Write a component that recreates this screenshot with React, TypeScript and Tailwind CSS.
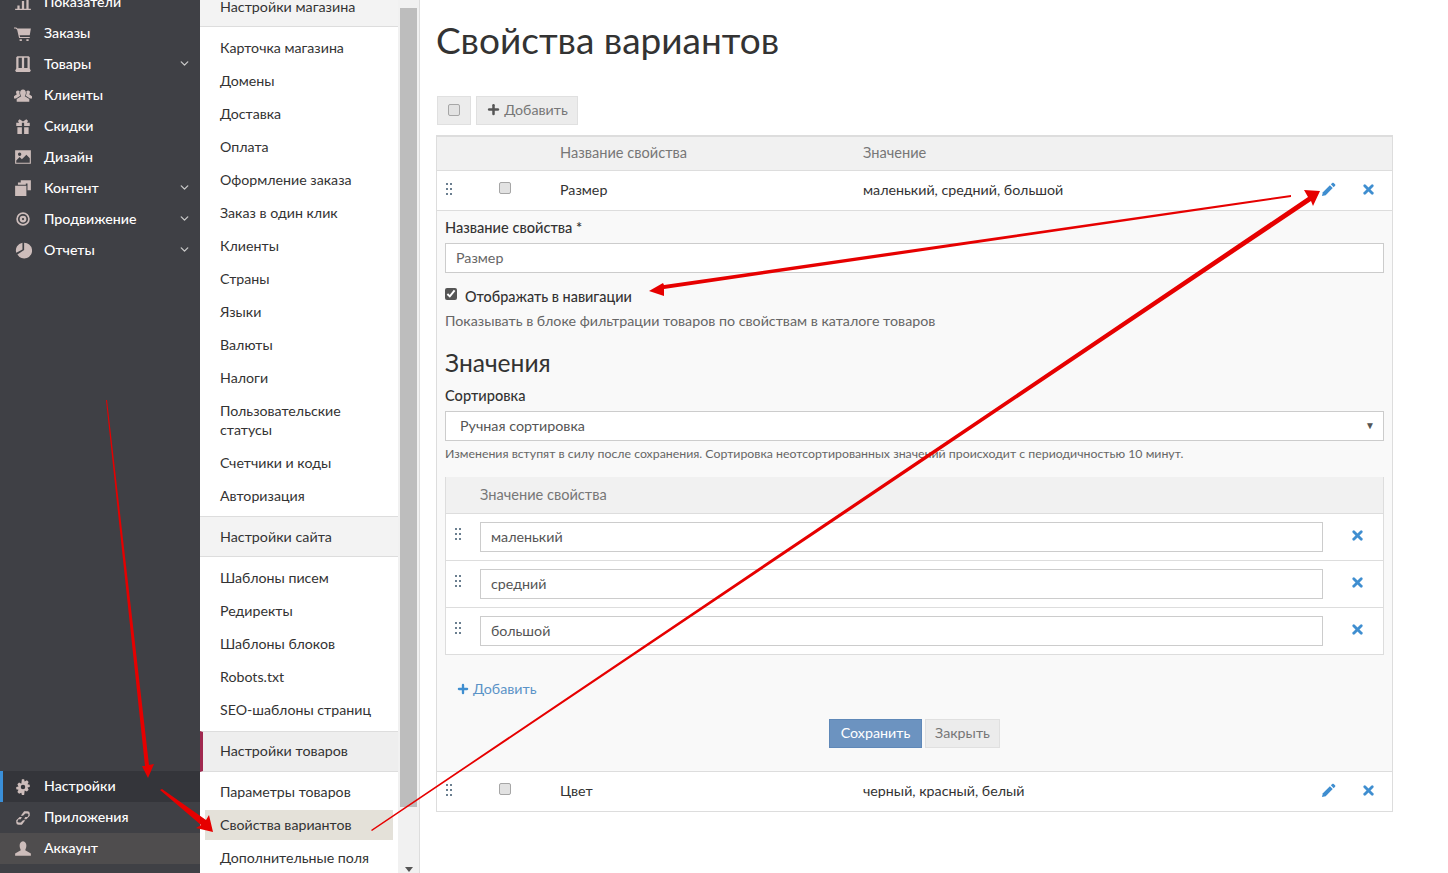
import React from "react";
import { Plus, X, ChevronDown } from "lucide-react";

const Icon = ({ d }: { d: string }) => (
  <svg viewBox="0 0 16 16" className="w-[18px] h-[18px]" fill="#cdbdbb"><path d={d} /></svg>
);
const top: [string, string, boolean][] = [
  ["Показатели", "M1 14h14v1H1zM3 11h2v3H3zM7 7h2v7H7zM11 2h2v12h-2z", false],
  ["Заказы", "M0 3h2l1 1h12l-1 6H5l.4 1.500h8.600v1H4.500L2.800 5 1.500 4H0zM5 13.500h2V15H5zM11 13.500h2V15h-2z", false],
  ["Товары", "M3 1h10l1 1v10l1 2-1 1H2l-1-1 1-2V2zM4 2.500v9h3v-9zM9 2.500v9h3v-9z", true],
  ["Клиенты", "M8 3c1.700 0 2.600 1.400 2.600 3 0 1.300-.6 2.300-1 3l4 2.500V14H2.400v-2.500l4-2.500c-.4-.7-1-1.700-1-3 0-1.600.9-3 2.600-3zM3.500 4c.6 0 1.100.2 1.500.6-.4 1.500 0 3 .6 4L1.800 11H0V9l2.500-1.600C2 6.700 1.800 6 1.800 5.500 1.800 4.700 2.500 4 3.500 4zM12.500 4c1 0 1.700.7 1.700 1.500 0 .5-.2 1.200-.7 1.900L16 9v2h-1.800l-3.800-2.400c.6-1 1-2.500.6-4 .4-.4.900-.6 1.500-.6z", false],
  ["Скидки", "M2 5h2.500L3.500 3.500 5 2l3 2 3-2 1.500 1.500L11.500 5H14v3H9V5H7v3H2zM3 9h4v6H3zM9 9h4v6H9z", false],
  ["Дизайн", "M1 2h14v12H1zM2 3v10h12V9l-3-3-4 4-2-2-3 3zM5 4a1.500 1.500 0 100 3 1.500 1.500 0 000-3z", false],
  ["Контент", "M6 1h9v9h-3V4H6zM3.500 3h7v2h-7zM1 6h10v9H1z", true],
  ["Продвижение", "M8 2a6 6 0 100 12A6 6 0 008 2zm0 1.500a4.500 4.500 0 110 9 4.500 4.500 0 010-9zM8 5a3 3 0 100 6 3 3 0 000-6zm0 2a1 1 0 110 2 1 1 0 010-2z", true],
  ["Отчеты", "M9 1.500a7 7 0 11-6 10.500l6-4zM7.500 1.500v6l-5.500 3a7 7 0 015.500-9z", true],
];
const bottom: [string, string, string][] = [
  ["Настройки", "M7 1h2l.5 2 2-1 1.500 1.500-1 2 2 .5v2l-2 .5 1 2-1.500 1.500-2-1L9 15H7l-.5-2-2 1L3 12.500l1-2-2-.5V8l2-.5-1-2L4.500 4l2 1zM8 6a2 2 0 100 4 2 2 0 000-4z", "bg-[#34353a] border-l-[3px] border-[#3a8fd8] pl-[11px]"],
  ["Приложения", "M9 2h3a2 2 0 012 2v2l-3 3H9l1-2h2l1-2-1-1H10L8 6H6zM7 14H4a2 2 0 01-2-2v-2l3-3h2L6 9H4l-1 2 1 1h2l2-2h2z", "pl-[14px]"],
  ["Аккаунт", "M8 1c2 0 3 2 3 4s-1 3-1 4l5 3v2H1v-2l5-3c0-1-1-2-1-4s1-4 3-4z", "bg-[#4f4d4e] pl-[14px]"],
];
const Item = ({ t, active }: { t: string; active?: boolean }) => (
  <div className={`mb-[3px] ml-[5px] mr-[5px] pl-[15px] py-[5px] text-[14.200px] leading-[20px] text-[#333] ${active ? "bg-[#e4e1d9]" : ""}`}>{t}</div>
);
const Head = ({ t, mark }: { t: string; mark?: boolean }) => (
  <div className={`h-[41px] flex items-center text-[14.300px] border-y border-[#ddd] ${mark ? "border-l-[3px] border-l-[#a0284f] pl-[17px] pb-[2px] bg-[#eee]" : "pl-5 bg-[#f3f3f3]"} text-[#333]`}>{t}</div>
);
const Grip = () => (
  <div className="grid grid-cols-2 w-[6px] gap-x-[2px] gap-y-[3px]">
    {[0, 1, 2, 3, 4, 5].map((i) => <span key={i} className="w-[2px] h-[2px] bg-[#6b7f90]" />)}
  </div>
);
const Box = () => (
  <span className="block w-[12px] h-[12px] rounded-[2px] bg-[#e2e2e2] border border-[#a6a6a6]" />
);
const Checked = () => <input type="checkbox" defaultChecked className="w-[12px] h-[12px] m-0 -mt-[6px] accent-[#555]" />;
const BluePencil = () => (
  <svg viewBox="0 0 16 16" className="w-[15px] h-[15px]" fill="#3f8ed0">
    <path d="M1 15l1-4 7.500-7.500 3 3L5 14z" />
    <path d="M10.500 2.500L12 1c.5-.4 1-.4 1.500 0l1.500 1.500c.4.5.4 1 0 1.500l-1.500 1.500z" />
  </svg>
);
const BlueX = () => <X size={15} stroke="#3f8ed0" strokeWidth={4.5} />;
const Row = ({ a, b }: { a: string; b: string }) => (
  <div className="flex items-center h-[39px] bg-white text-[14.250px] text-[#333]">
    <div className="w-[62px] pl-[9px] -mt-[4px]"><Grip /></div>
    <div className="w-[61px] -mt-[6px]"><Box /></div>
    <div className="w-[303px] pb-[2px]">{a}</div>
    <div className="flex-1 pb-[2px]">{b}</div>
    <div className="w-[40px] -mt-[3px]"><BluePencil /></div>
    <div className="w-[31px] -mt-[3px]"><BlueX /></div>
  </div>
);
const Value = ({ v, last }: { v: string; last?: boolean }) => (
  <div className={`flex items-center ${last ? "h-[46px]" : "h-[47px] border-b border-[#ddd]"}`}>
    <div className="w-[34px] pl-[9px] -mt-[6px]"><Grip /></div>
    <div className="w-[843px] h-[30px] border border-[#ccc] bg-white pl-[10px] flex items-center text-[14.250px] text-[#555]">{v}</div>
    <div className="pl-[27px] -mt-[4px]"><BlueX /></div>
  </div>
);

export default function App() {
  return (
    <div className="relative flex h-[873px] w-[1448px] overflow-hidden bg-white" style={{ fontFamily: 'Lato,"Open Sans",sans-serif' }}>
      <aside className="w-[200px] shrink-0 bg-[#3f4045] flex flex-col justify-between text-[14.200px] font-medium text-white">
        <div className="-mt-[14px]">
          {top.map(([t, d, c]) => (
            <div key={t} className="flex items-center h-[31px] pl-[14px] pr-[9px]">
              <Icon d={d} /><span className="ml-[12px] flex-1">{t}</span>
              {c && <ChevronDown size={13} stroke="#c7c7c7" strokeWidth={2.5} />}
            </div>
          ))}
        </div>
        <div className="pb-[9px]">
          {bottom.map(([t, d, c]) => (
            <div key={t} className={`flex items-center h-[31px] ${c}`}>
              <Icon d={d} /><span className="ml-3 pb-[2px]">{t}</span>
            </div>
          ))}
        </div>
      </aside>
      <nav className="w-[198px] shrink-0 -mt-[14px]">
        <Head t="Настройки магазина" />
        <div className="pt-[6px] pb-[2px]">
          {["Карточка магазина","Домены","Доставка","Оплата","Оформление заказа","Заказ в один клик","Клиенты","Страны","Языки","Валюты","Налоги"].map((t) => <Item key={t} t={t} />)}
          <div className="mb-[4px] ml-[20px] py-[5px] text-[14.200px] leading-[19px] text-[#333] mr-8">Пользовательские статусы</div>
          <Item t="Счетчики и коды" /><Item t="Авторизация" />
        </div>
        <Head t="Настройки сайта" />
        <div className="pt-[6px] pb-[3px]">
          {["Шаблоны писем","Редиректы","Шаблоны блоков","Robots.txt","SEO-шаблоны страниц"].map((t) => <Item key={t} t={t} />)}
        </div>
        <Head t="Настройки товаров" mark />
        <div className="pt-[5px]">
          <Item t="Параметры товаров" /><Item t="Свойства вариантов" active /><Item t="Дополнительные поля" />
        </div>
      </nav>
      <div className="w-[22px] shrink-0 h-full bg-[#f1f1f1] border-r border-[#ddd] flex flex-col px-[2px] pt-[8px]">
        <div className="h-[799px] w-[17px] bg-[#bdbdbd]" />
        <div className="mt-auto mx-auto mb-[1px] border-x-[4px] border-x-transparent border-t-[5px] border-t-[#555]" />
      </div>
      <main className="flex-1 pl-[16px] pr-[55px] text-[#333]">
        <h1 className="text-[37px] leading-[50px] mt-[15px] mb-[31px] text-[#333]">Свойства вариантов</h1>
        <div className="flex gap-[5px] ml-[1px] h-[29px] mb-[10px]">
          <div className="w-[34px] bg-[#ececec] border border-[#e0e0e0] flex items-center justify-center pb-[2px]"><Box /></div>
          <div className="w-[102px] bg-[#ececec] border border-[#e0e0e0] flex items-center justify-center gap-[3px] pb-[2px] text-[14.250px] text-[#777]"><Plus size={15} strokeWidth={4} stroke="#555" />Добавить</div>
        </div>
        <section className="border border-[#ddd] border-t-2">
          <div className="flex items-center h-[34px] bg-[#f1f1f1] border-b border-[#ddd] pb-[2px] text-[14.600px] text-[#777]">
            <div className="w-[123px]" /><div className="w-[303px]">Название свойства</div><div>Значение</div>
          </div>
          <Row a="Размер" b="маленький, средний, большой" />
          <div className="bg-[#f9f9f9] border-y border-[#ddd] h-[562px] px-[8px] pt-[7px]">
            <div className="text-[14.600px] font-medium leading-[20px]">Название свойства *</div>
            <div className="mt-[5px] h-[30px] border border-[#ccc] bg-white pl-[10px] flex items-center text-[14.250px] text-[#666]">Размер</div>
            <div className="flex items-center mt-[14px] h-[20px] text-[14.400px] font-medium"><Checked /><span className="ml-[8px]">Отображать в навигации</span></div>
            <div className="mt-[4px] text-[14.250px] leading-[20px] text-[#666]">Показывать в блоке фильтрации товаров по свойствам в каталоге товаров</div>
            <h2 className="mt-[17px] text-[24.600px] leading-[30px]">Значения</h2>
            <div className="mt-[8px] text-[14.600px] font-medium leading-[20px]">Сортировка</div>
            <div className="mt-[5px] h-[30px] border border-[#ccc] bg-white pl-[14px] pr-[8px] flex items-center justify-between text-[14.300px] text-[#555]">Ручная сортировка<span className="text-[10px] -mt-[2px]">▼</span></div>
            <div className="mt-[5px] text-[12.320px] leading-[16px] text-[#666]">Изменения вступят в силу после сохранения. Сортировка неотсортированных значений происходит с периодичностью 10 минут.</div>
            <div className="mt-[15px] border border-[#ddd] border-t-0 bg-white">
              <div className="h-[37px] bg-[#f1f1f1] border-b border-[#ddd] pl-[34px] flex items-center text-[14.600px] text-[#777]">Значение свойства</div>
              <Value v="маленький" /><Value v="средний" /><Value v="большой" last />
            </div>
            <div className="flex items-center gap-[3px] mt-[23px] ml-[11px] text-[14.250px] text-[#5b93c7]"><Plus size={14} strokeWidth={4} stroke="#3f8ed0" />Добавить</div>
            <div className="flex justify-center gap-[3px] mt-[20px]">
              <div className="w-[93px] h-[29px] pb-[2px] bg-[#6c93c0] border border-[#5f88b8] text-white text-[14.250px] flex items-center justify-center">Сохранить</div>
              <div className="w-[75px] h-[29px] pb-[2px] bg-[#ececec] border border-[#e0e0e0] text-[#777] text-[14.250px] flex items-center justify-center">Закрыть</div>
            </div>
          </div>
          <Row a="Цвет" b="черный, красный, белый" />
        </section>
      </main>
      <svg className="absolute inset-0 pointer-events-none" width="1448" height="873" viewBox="0 0 1448 873">
        <g fill="#e60000">
          <polygon points="106,400 107,400 149,765 154,764 148,778 142,766 145,766" />
          <polygon points="160,790 162,789 206,820 209,815 213,832 196,828 201,825" />
          <polygon points="1291,195 1291,197 664,289 664,296 649,291 663,283 664,285" />
          <polygon points="372,831 371,830 1308,197 1304,190 1320,191 1313,206 1311,201" />
        </g>
      </svg>
    </div>
  );
}
